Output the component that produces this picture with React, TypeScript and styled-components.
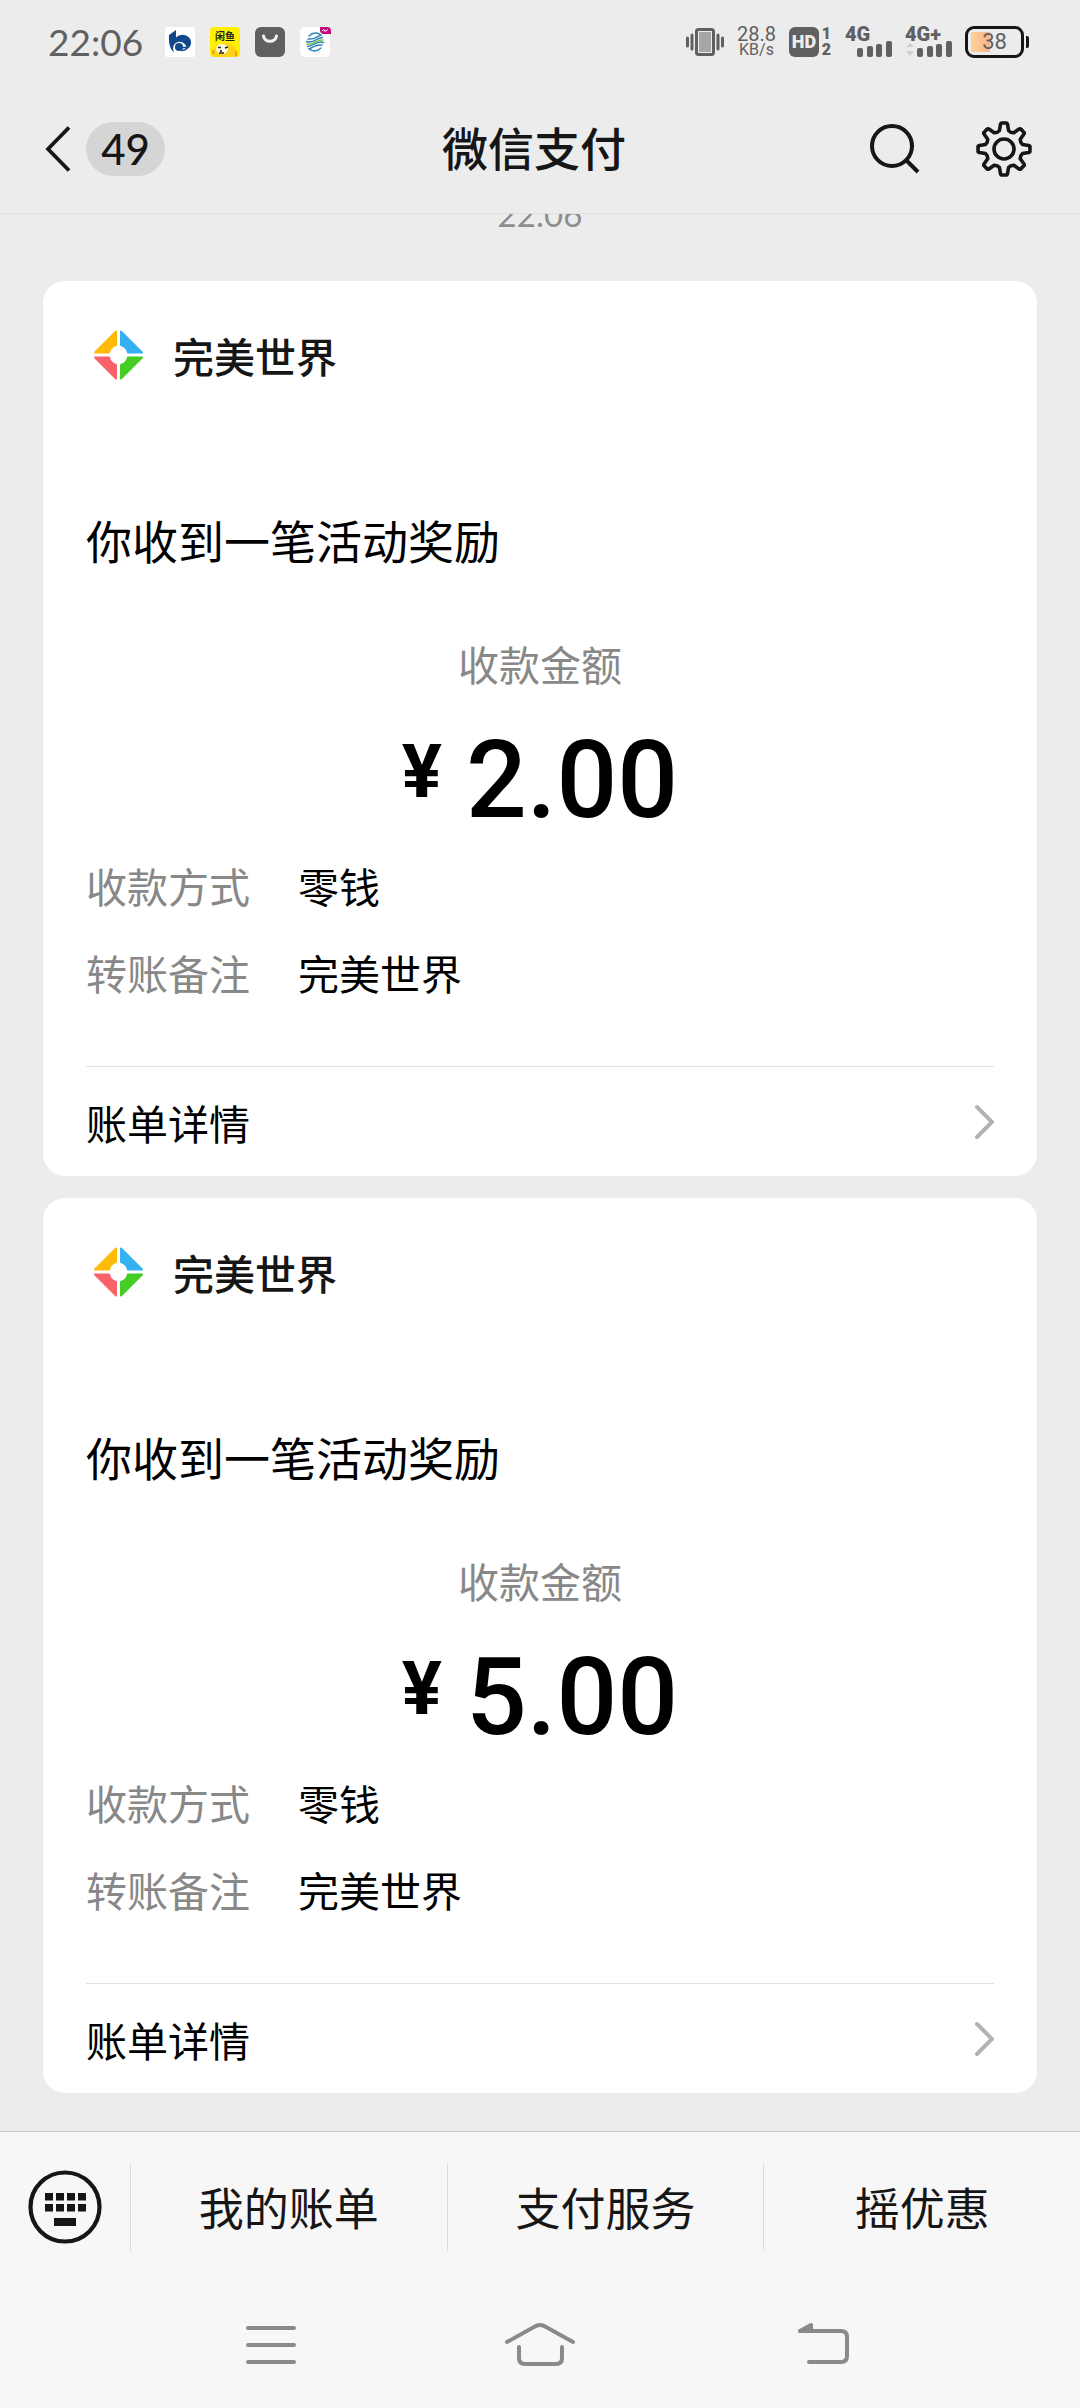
import React from 'react';
import styled, { createGlobalStyle } from 'styled-components';

const CJK = '"Noto Sans CJK SC", "Noto Sans", sans-serif';
const LATIN = 'Lato, "Noto Sans", sans-serif';
const DIGITS = 'Roboto, "Noto Sans", sans-serif';

const GlobalStyle = createGlobalStyle`
  *, *::before, *::after { box-sizing: border-box; }
  body { margin: 0; background: #ececec; color: #000; font-family: ${CJK}; }
  button { margin: 0; padding: 0; border: 0; background: none; color: inherit; font: inherit; cursor: pointer; }
  h1, h2, p, dl, dt, dd { margin: 0; font-weight: inherit; }
  svg { display: block; flex: none; }
`;

const Page = styled.div`
  display: flex;
  flex-direction: column;
  min-height: 100vh;
`;

/* ---------- status bar ---------- */

const StatusBar = styled.div`
  display: flex;
  align-items: center;
  justify-content: space-between;
  height: 84px;
  padding: 0 51px 0 48px;
  color: #606060;
`;

const StatusGroup = styled.div<{ $gap: number }>`
  display: flex;
  align-items: center;
  gap: ${(p) => p.$gap}px;
`;

const Clock = styled.time`
  margin-right: 7px;
  font: 400 37px/44px ${LATIN};
`;

const NetSpeed = styled.div`
  display: flex;
  flex-direction: column;
  align-items: center;
  font: 400 20px/16px ${DIGITS};
`;

const SpeedUnit = styled.span`
  font-size: 16px;
`;

const HdGroup = styled.div`
  display: flex;
  gap: 2px;
`;

const HdBadge = styled.span`
  width: 30px;
  height: 30px;
  border-radius: 6px;
  background: #606060;
  color: #ececec;
  text-align: center;
  font: 900 18px/30px ${DIGITS};
`;

const SimNumbers = styled.span`
  display: flex;
  flex-direction: column;
  justify-content: space-between;
  width: 11px;
  height: 30px;
  text-align: center;
  font: 900 16px/14px ${DIGITS};
`;

const Signal = styled.div`
  display: flex;
  flex-direction: column;
  width: 47px;
  font: 900 20px/14px ${DIGITS};
`;

const Battery = styled.div`
  display: flex;
  align-items: center;
  gap: 2px;

  &::after {
    content: '';
    width: 3px;
    height: 12px;
    border-radius: 0 2px 2px 0;
    background: #161616;
  }
`;

const BatteryBody = styled.div`
  width: 59px;
  height: 32px;
  padding: 3px;
  border: 3px solid #161616;
  border-radius: 9px;
  background: linear-gradient(90deg, #ffcf9b, #f9b48a) no-repeat 3px 3px / 19px 20px;
  text-align: center;
  font: 400 22px/20px ${DIGITS};
`;

/* ---------- title bar ---------- */

const TitleBar = styled.header`
  display: grid;
  grid-template-columns: 1fr auto 1fr;
  align-items: center;
  height: 130px;
  padding: 0 48px 0 36px;
  border-bottom: 1px solid #e0e0e0;
  color: #161616;
`;

const BackButton = styled.button`
  display: flex;
  align-items: center;
  justify-self: start;
  gap: 12px;
`;

const Unread = styled.span`
  min-width: 79px;
  height: 54px;
  padding: 0 12px;
  border-radius: 27px;
  background: #d5d5d5;
  text-align: center;
  font: 500 42px/54px ${LATIN};
`;

const Title = styled.h1`
  padding-bottom: 6px;
  font-size: 46px;
  font-weight: 500;
  line-height: 60px;
`;

const Actions = styled.div`
  display: flex;
  align-items: center;
  justify-self: end;
  gap: 52px;
`;

/* ---------- message feed ---------- */

const Feed = styled.main`
  display: flex;
  flex: 1;
  flex-direction: column;
  gap: 22px;
  overflow: hidden;
  padding: 0 43px 38px;
`;

const Timestamp = styled.time`
  margin: -20px 0 25px;
  color: #8e8e8e;
  text-align: center;
  font: 400 33px/40px ${LATIN};
`;

const Card = styled.article`
  display: flex;
  flex-direction: column;
  padding: 42px 43px 0;
  border-radius: 22px;
  background: #fff;
`;

const Merchant = styled.div`
  display: flex;
  align-items: center;
  gap: 22px;
  color: #161616;
  font-size: 41px;
  font-weight: 500;
  line-height: 64px;
`;

const Headline = styled.h2`
  margin-top: 120px;
  font-size: 46px;
  line-height: 64px;
`;

const AmountLabel = styled.p`
  margin-top: 64px;
  color: #888;
  text-align: center;
  font-size: 41px;
  line-height: 56px;
`;

const Amount = styled.p`
  display: flex;
  align-items: flex-start;
  justify-content: center;
  gap: 24px;
  margin-top: 35px;
  font: 500 107px/110px ${DIGITS};
`;

const Currency = styled.span`
  font-size: 75px;
  font-weight: 700;
  line-height: 90px;
`;

const Details = styled.dl`
  display: grid;
  grid-template-columns: 164px 1fr;
  gap: 31px 48px;
  margin-top: 21px;
  font-size: 41px;
  line-height: 56px;
`;

const Term = styled.dt`
  color: #888;
`;

const BillLink = styled.a`
  display: flex;
  align-items: center;
  justify-content: space-between;
  height: 110px;
  margin-top: 66px;
  border-top: 1px solid #e2e2e2;
  color: inherit;
  text-decoration: none;
  font-size: 41px;
`;

/* ---------- bottom menu and system navigation ---------- */

const Bottom = styled.footer`
  border-top: 1px solid #c8c8c8;
  background: #f7f7f7;
`;

const MenuBar = styled.nav`
  display: flex;
  align-items: center;
  height: 150px;
  color: #161616;
`;

const KeyboardButton = styled.button`
  display: flex;
  justify-content: center;
  width: 130px;
`;

const MenuItem = styled.button`
  flex: 1;
  height: 88px;
  border-left: 1px solid #dcdcdc;
  font-size: 45px;
  line-height: 88px;
`;

const SystemNav = styled.nav`
  display: grid;
  grid-template-columns: repeat(3, 1fr);
  justify-items: center;
  padding: 31px 126px;
`;

/* ---------- drawings ---------- */

const BankIcon = () => (
  <svg width="30" height="30" viewBox="0 0 30 30" aria-hidden="true">
    <rect width="30" height="30" rx="2" fill="#fff" />
    <path d="M4 8 11 3v7.500c3-3 7-3.500 10-2 4 1.500 5.500 5 5 8-.500 3-2 4.500-4 5.500-.500-5-5-8-9-7-4 .800-6 5-4 10.500C5 22 3.500 17 4 8z" fill="#12488a" />
    <circle cx="14" cy="20" r="4" fill="#12488a" />
    <path d="M16 20.500h7M16 23.500q4 0 6-2" fill="none" stroke="#12488a" strokeWidth="1.600" />
  </svg>
);

const FishIcon = () => (
  <svg width="30" height="30" viewBox="0 0 30 30" aria-hidden="true">
    <rect width="30" height="30" rx="4" fill="#fff000" />
    <text x="15" y="13" textAnchor="middle" fontFamily='"Noto Sans CJK SC", sans-serif' fontSize="10" fontWeight="700" fill="#222">闲鱼</text>
    <path d="M3 30c0-9 4-14 12-14 7 0 12 4 13 14z" fill="#ffd21a" />
    <ellipse cx="12" cy="22" rx="6" ry="5" fill="#fffbe0" />
    <path d="M8 20.500h3M15 21l3-1M9 26h5M11 23v2" stroke="#222" strokeWidth="1.600" />
    <path d="M3 23v4M26 24v5" stroke="#f59b14" strokeWidth="2" />
  </svg>
);

const BagIcon = () => (
  <svg width="30" height="30" viewBox="0 0 30 30" aria-hidden="true">
    <rect width="30" height="30" rx="6" fill="#606060" />
    <path d="M8.500 9c1 7 12 7 13 0" fill="none" stroke="#f2f2f2" strokeWidth="3" strokeLinecap="round" />
  </svg>
);

const MobileIcon = () => (
  <svg width="31" height="30" viewBox="0 0 31 30" aria-hidden="true">
    <rect width="30" height="30" rx="5" fill="#fff" />
    <g fill="none" strokeWidth="1.500" strokeLinecap="round">
      <path d="M9 9c4-4 9-3.500 12-1-4 1-6 5-13 4M6.500 14.500c7 2.500 9-3.500 16-4M21 21c-4 4-9 3.500-12 1 4-1 6-5 13-4M23.500 15.500c-7-2.500-9 3.500-16 4" stroke="#2a86b8" />
      <path d="M7 17c7 1.500 9-4.500 16-4" stroke="#8cc63f" />
    </g>
    <path d="M20 0h7q4 0 4 4v3h-7q-4 0-4-4z" fill="#c4087c" />
    <path d="m22 4 2-1.500 1 2 3-2" fill="none" stroke="#fff" strokeWidth="1" />
  </svg>
);

const VibrateIcon = () => (
  <svg width="38" height="30" viewBox="0 0 38 30" aria-hidden="true">
    <rect x="10.500" y="2.500" width="17" height="25" rx="2" fill="none" stroke="#606060" strokeWidth="3" />
    <rect x="13" y="5" width="12" height="20" fill="#a6a6a6" />
    <path d="M1.500 11v8M36.500 11v8M6 8v14M32 8v14" stroke="#606060" strokeWidth="3" strokeLinecap="round" />
  </svg>
);

const SignalBars = ({ arrows }: { arrows?: boolean }) => (
  <svg width="47" height="16" viewBox="0 0 47 16" aria-hidden="true">
    {arrows && <path d="M5 2 9 6H1zM5 15 1 10h8z" fill="#cfcfcf" />}
    <g fill="#606060">
      <rect x="12" y="7" width="6" height="9" rx="2" />
      <rect x="22" y="5" width="6" height="11" rx="2" />
      <rect x="31" y="3" width="6" height="13" rx="2" />
      <rect x="41" y="0" width="6" height="16" rx="2" />
    </g>
  </svg>
);

const BackIcon = () => (
  <svg width="38" height="48" viewBox="0 0 38 48" aria-hidden="true">
    <path d="M33 2.500 12 24l21 21.500" fill="none" stroke="currentColor" strokeWidth="3.800" />
  </svg>
);

const SearchIcon = () => (
  <svg width="54" height="56" viewBox="0 0 54 56" aria-hidden="true">
    <circle cx="22" cy="25" r="20" fill="none" stroke="currentColor" strokeWidth="4" />
    <path d="m36 39 12 12" stroke="currentColor" strokeWidth="4" />
  </svg>
);

const polar = (radius: number, degrees: number) => {
  const a = (degrees * Math.PI) / 180;
  return `${(28 + radius * Math.sin(a)).toFixed(2)} ${(28 - radius * Math.cos(a)).toFixed(2)}`;
};

const gearPath =
  Array.from({ length: 8 }, (_, i) => {
    const a = i * 45;
    return `${i ? 'L' : 'M'}${polar(19, a - 14)}L${polar(25, a - 8)}Q${polar(26.4, a - 7)} ${polar(26, a - 4)}L${polar(26, a + 4)}Q${polar(26.4, a + 7)} ${polar(25, a + 8)}L${polar(19, a + 14)}Q${polar(17.4, a + 22.5)} ${polar(19, a + 31)}`;
  }).join('') + 'Z';

const GearIcon = () => (
  <svg width="56" height="56" viewBox="0 0 56 56" aria-hidden="true">
    <g fill="none" stroke="currentColor" strokeWidth="3.600" strokeLinejoin="round">
      <path d={gearPath} />
      <circle cx="28" cy="28" r="10" />
    </g>
  </svg>
);

const MerchantLogo = () => (
  <svg width="65" height="64" viewBox="0 0 65 64" aria-hidden="true">
    <g strokeWidth="2" strokeLinejoin="round">
      <path d="M30 8.500V22A10 10 0 0 0 23 29.500H9z" fill="#fdbb05" stroke="#fdbb05" />
      <path d="M35 8.500V22A10 10 0 0 1 42 29.500H56z" fill="#36b1f0" stroke="#36b1f0" />
      <path d="M30 55.500V42A10 10 0 0 1 23 34.500H9z" fill="#f96268" stroke="#f96268" />
      <path d="M35 55.500V42A10 10 0 0 0 42 34.500H56z" fill="#45cc25" stroke="#45cc25" />
    </g>
  </svg>
);

const ChevronIcon = () => (
  <svg width="20" height="36" viewBox="0 0 20 36" aria-hidden="true">
    <path d="M3 3 18 18 3 33" fill="none" stroke="#b2b2b2" strokeWidth="4" strokeLinecap="round" />
  </svg>
);

const KeyboardIcon = () => (
  <svg width="74" height="76" viewBox="0 0 74 76" aria-hidden="true">
    <circle cx="37" cy="38" r="34.500" fill="none" stroke="currentColor" strokeWidth="4.200" />
    <g fill="currentColor">
      {[17, 28, 39, 50].map((x) => (
        <React.Fragment key={x}>
          <rect x={x} y="24" width="8" height="7.500" />
          <rect x={x} y="35" width="8" height="7.500" />
        </React.Fragment>
      ))}
      <rect x="26" y="49" width="22" height="8" />
    </g>
  </svg>
);

const NavIcon = ({ children }: { children: React.ReactNode }) => (
  <svg width="90" height="64" viewBox="0 0 90 64" fill="none" stroke="#8a8a8a" strokeWidth="4" strokeLinecap="round" strokeLinejoin="round" aria-hidden="true">
    {children}
  </svg>
);

/* ---------- data and page ---------- */

const payments = [
  { id: 'p1', merchant: '完美世界', headline: '你收到一笔活动奖励', amount: '2.00', method: '零钱', note: '完美世界' },
  { id: 'p2', merchant: '完美世界', headline: '你收到一笔活动奖励', amount: '5.00', method: '零钱', note: '完美世界' },
];

const menu = ['我的账单', '支付服务', '摇优惠'];

export default function App() {
  return (
    <Page>
      <GlobalStyle />
      <StatusBar>
        <StatusGroup $gap={15}>
          <Clock>22:06</Clock>
          <BankIcon />
          <FishIcon />
          <BagIcon />
          <MobileIcon />
        </StatusGroup>
        <StatusGroup $gap={13}>
          <VibrateIcon />
          <NetSpeed>
            <span>28.8</span>
            <SpeedUnit>KB/s</SpeedUnit>
          </NetSpeed>
          <HdGroup>
            <HdBadge>HD</HdBadge>
            <SimNumbers>
              <span>1</span>
              <span>2</span>
            </SimNumbers>
          </HdGroup>
          <Signal>
            4G
            <SignalBars />
          </Signal>
          <Signal>
            4G+
            <SignalBars arrows />
          </Signal>
          <Battery>
            <BatteryBody>38</BatteryBody>
          </Battery>
        </StatusGroup>
      </StatusBar>

      <TitleBar>
        <BackButton aria-label="返回">
          <BackIcon />
          <Unread>49</Unread>
        </BackButton>
        <Title>微信支付</Title>
        <Actions>
          <button aria-label="搜索"><SearchIcon /></button>
          <button aria-label="设置"><GearIcon /></button>
        </Actions>
      </TitleBar>

      <Feed>
        <Timestamp>22:06</Timestamp>
        {payments.map((p) => (
          <Card key={p.id}>
            <Merchant>
              <MerchantLogo />
              <span>{p.merchant}</span>
            </Merchant>
            <Headline>{p.headline}</Headline>
            <AmountLabel>收款金额</AmountLabel>
            <Amount>
              <Currency>¥</Currency>
              <span>{p.amount}</span>
            </Amount>
            <Details>
              <Term>收款方式</Term>
              <dd>{p.method}</dd>
              <Term>转账备注</Term>
              <dd>{p.note}</dd>
            </Details>
            <BillLink href="#">
              <span>账单详情</span>
              <ChevronIcon />
            </BillLink>
          </Card>
        ))}
      </Feed>

      <Bottom>
        <MenuBar>
          <KeyboardButton aria-label="键盘"><KeyboardIcon /></KeyboardButton>
          {menu.map((label) => (
            <MenuItem key={label}>{label}</MenuItem>
          ))}
        </MenuBar>
        <SystemNav>
          <button aria-label="最近任务">
            <NavIcon><path d="M29 15h46M29 32h46M29 49h46" /></NavIcon>
          </button>
          <button aria-label="主屏幕">
            <NavIcon>
              <path d="M12 29 39 14q6-4 12 0L78 29M24 34v11q0 6 6 6h31q6 0 6-6V34" />
            </NavIcon>
          </button>
          <button aria-label="上一步">
            <NavIcon>
              <path d="M40 12v6H29z" fill="#8a8a8a" />
              <path d="M29 18h41q6 0 6 6v19q0 6-6 6H38" />
            </NavIcon>
          </button>
        </SystemNav>
      </Bottom>
    </Page>
  );
}
